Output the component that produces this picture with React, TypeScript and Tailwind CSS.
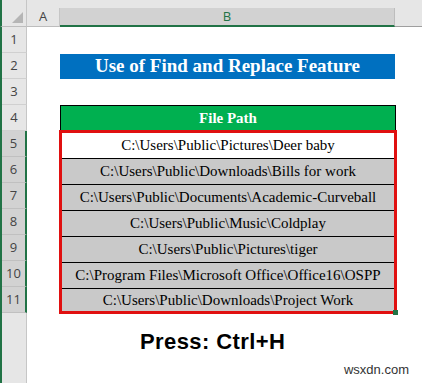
const paths = [
  "C:\\Users\\Public\\Pictures\\Deer baby",
  "C:\\Users\\Public\\Downloads\\Bills for work",
  "C:\\Users\\Public\\Documents\\Academic-Curveball",
  "C:\\Users\\Public\\Music\\Coldplay",
  "C:\\Users\\Public\\Pictures\\tiger",
  "C:\\Program Files\\Microsoft Office\\Office16\\OSPP",
  "C:\\Users\\Public\\Downloads\\Project Work",
];

const rowNums = [1, 2, 3, 4, 5, 6, 7, 8, 9, 10, 11];

export default function App() {
  return (
    <div className="w-[422px] h-[383px] overflow-hidden bg-white flex flex-col">
      {/* column headers */}
      <div className="flex h-[27px] shrink-0 bg-[#e6e6e6] font-['Open_Sans',sans-serif] text-[13px] text-[#444]">
        <div className="w-[27px] shrink-0 border-l-2 border-[#217346] flex items-end justify-end pr-[3px] pb-[3px] border-r border-r-[#c6c6c6] border-b border-b-[#bdbdbd]">
          <div className="w-0 h-0 border-l-[11px] border-l-transparent border-b-[11px] border-b-[#b5b5b5]" />
        </div>
        <div className="w-[33px] shrink-0 mt-[8px] flex items-center justify-center border-r border-[#c6c6c6] border-b border-b-[#bdbdbd]">
          A
        </div>
        <div className="w-[335px] shrink-0 mt-[8px] flex items-center justify-center bg-[#d2d2d2] text-[#217346] border-b-2 border-[#217346] border-r border-r-[#bdbdbd]">
          B
        </div>
        <div className="flex-1 mt-[8px] border-b border-[#9f9f9f]" />
      </div>

      <div className="flex flex-1">
        {/* row headers */}
        <div className="w-[27px] shrink-0 bg-[#e6e6e6] border-l-2 border-[#217346] flex flex-col font-['Open_Sans',sans-serif] text-[13px] text-[#444]">
          {rowNums.map((n) => (
            <div
              key={n}
              className={
                n >= 5
                  ? "h-[26px] shrink-0 flex items-center justify-center bg-[#d2d2d2] border-b border-[#c0c0c0] border-r-2 border-r-[#217346]"
                  : "h-[26px] shrink-0 flex items-center justify-center border-b border-[#d0d0d0] border-r border-r-[#c6c6c6]"
              }
            >
              {n}
            </div>
          ))}
          <div className="flex-1 border-r border-[#c6c6c6]" />
        </div>

        {/* sheet */}
        <div className="flex-1 flex flex-col">
          <div className="h-[26px] shrink-0" />
          <div className="h-[26px] shrink-0 flex items-end pl-[33px]">
            <div className="w-[335px] h-[25px] bg-[#0070c0] flex items-center justify-center text-white font-bold text-[19px] font-['Liberation_Serif',serif]">
              Use of Find and Replace Feature
            </div>
          </div>
          <div className="h-[26px] shrink-0" />
          <div className="h-[25px] shrink-0 pl-[33px]">
            <div className="w-[336px] h-[26px] bg-[#00b050] border border-black flex items-center justify-center text-white font-bold text-[15px] font-['Liberation_Serif',serif]">
              File Path
            </div>
          </div>
          <div className="pl-[32px] relative">
            <div className="relative w-[338px] border-[3px] border-[#e01010] flex flex-col font-['Liberation_Serif',serif] text-[15px] text-black">
              {paths.map((p, i) => (
                <div
                  key={p}
                  className={
                    (i === 0 ? "bg-white" : "bg-[#c9c9c9]") +
                    " flex items-center justify-center " +
                    (i < paths.length - 1 ? "h-[26px] border-b border-black" : "h-[22px]")
                  }
                >
                  {p}
                </div>
              ))}
              <div className="absolute -right-[4px] -bottom-[4px] w-[5px] h-[5px] bg-[#217346]" />
            </div>
          </div>
          <div className="flex-1 flex flex-col">
            <div className="pt-[15px] pl-[113px] font-['Liberation_Sans',sans-serif] font-bold text-[22px] tracking-[0.4px] leading-[26px] text-black">
              Press: Ctrl+H
            </div>
            <div className="mt-auto pb-[4px] pr-[13px] text-right font-['Liberation_Sans',sans-serif] text-[13px] text-[#333]">
              wsxdn.com
            </div>
          </div>
        </div>
      </div>
    </div>
  );
}
